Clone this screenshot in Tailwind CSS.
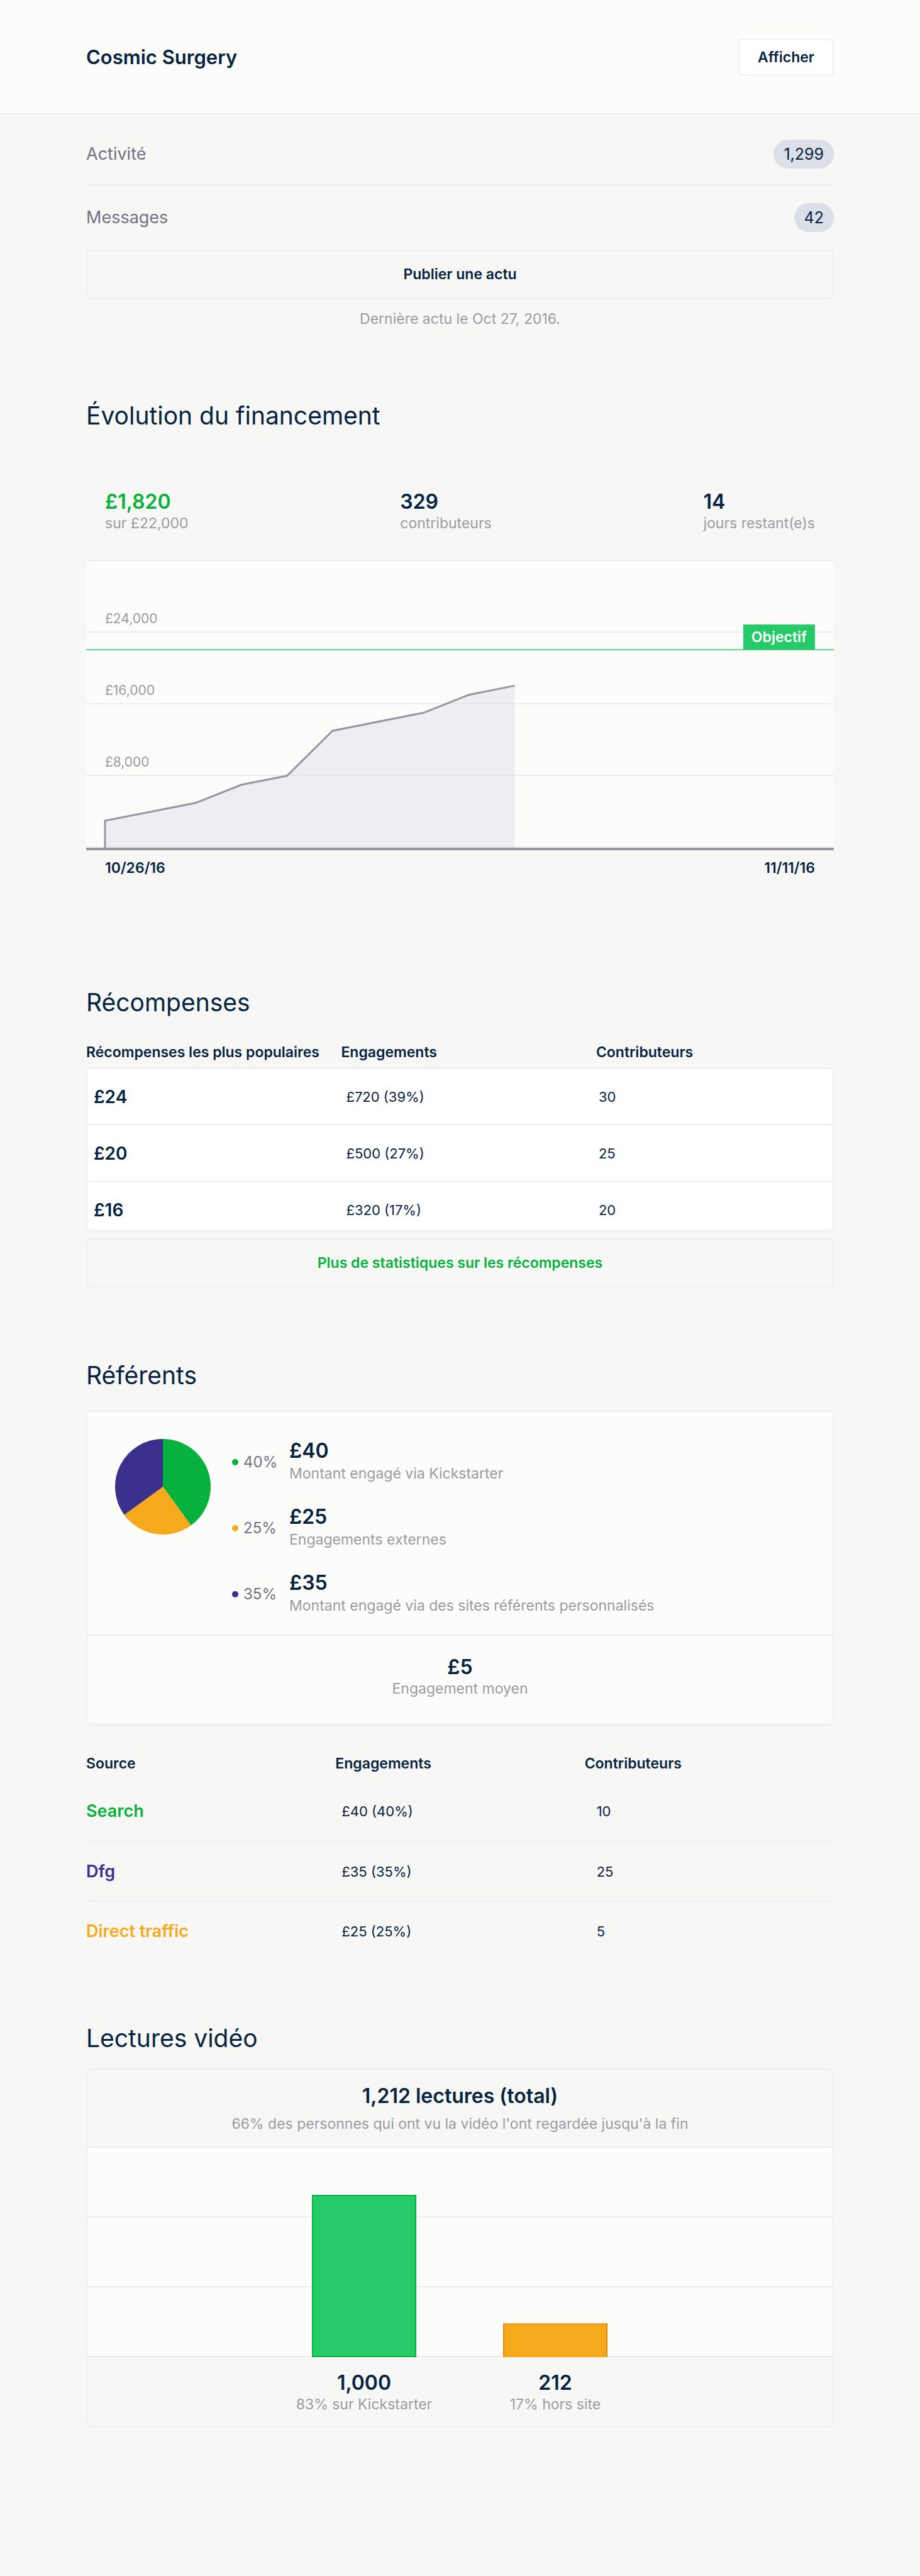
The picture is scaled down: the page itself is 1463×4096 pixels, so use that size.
<!DOCTYPE html>
<html lang="fr">
<head>
<meta charset="utf-8">
<title>Cosmic Surgery</title>
<meta name="viewport" content="width=device-width, initial-scale=1">
<script src="https://cdn.jsdelivr.net/npm/@tailwindcss/browser@4"></script>
</head>
<body class="min-h-screen bg-[#f7f7f6] pb-16 font-[Inter,sans-serif] text-[23px]/[32px] text-[#062340]">

<header class="flex items-start justify-between border-b-2 border-[#ececec] bg-[#fcfcfa] px-[137px] pt-[62px] pb-[60px]">
  <h1 class="text-[31px]/[58px] font-semibold">Cosmic Surgery</h1>
  <button type="button" class="h-[58px] rounded-[4px] border-2 border-[#eeeff3] bg-white px-[29px] font-semibold">Afficher</button>
</header>

<main class="px-[137px]">

  <nav class="text-[27px]/[46px] text-[#717284]">
    <a href="#activite" class="flex justify-between border-b-2 border-[#ececec] pt-10 pb-[25px]">
      <span>Activité</span>
      <span class="rounded-full bg-[#dcdee8] px-4 text-[25px]/[46px] text-[#062340]">1,299</span>
    </a>
    <a href="#messages" class="flex justify-between py-7">
      <span>Messages</span>
      <span class="rounded-full bg-[#dcdee8] px-4 text-[25px]/[46px] text-[#062340]">42</span>
    </a>
  </nav>
  <button type="button" class="block h-[78px] w-full rounded-[4px] border-2 border-[#eeeff3] font-semibold">Publier une actu</button>
  <p class="mt-4 text-center text-[#9b9ba3]">Dernière actu le Oct 27, 2016.</p>

  <!-- Funding progress -->
  <section class="mt-28">
    <h2 class="text-[39px]/[52px]">Évolution du financement</h2>
    <dl class="mt-[93px] flex justify-between px-[30px] pb-[42px]">
      <div class="flex flex-col-reverse">
        <dt class="text-[#9b9ba3]">sur £22,000</dt>
        <dd class="text-[32px]/[36px] font-semibold text-[#06b13c]">£1,820</dd>
      </div>
      <div class="flex flex-col-reverse">
        <dt class="text-[#9b9ba3]">contributeurs</dt>
        <dd class="text-[32px]/[36px] font-semibold">329</dd>
      </div>
      <div class="flex flex-col-reverse">
        <dt class="text-[#9b9ba3]">jours restant(e)s</dt>
        <dd class="text-[32px]/[36px] font-semibold">14</dd>
      </div>
    </dl>
    <div class="relative border-t-2 border-b-4 border-t-[#ececec] border-b-[#96969f] bg-[#fcfcfa] text-[21px]/[28px] text-[#9b9ba3]">
      <div class="flex h-[114px] items-end border-b-2 border-[#ececec] px-[30px] pb-[6px]">£24,000</div>
      <div class="flex h-[114px] items-end border-b-2 border-[#ececec] px-[30px] pb-[6px]">£16,000</div>
      <div class="flex h-[114px] items-end border-b-2 border-[#ececec] px-[30px] pb-[6px]">£8,000</div>
      <div class="h-[114px] border-b-2 border-[#ececec]"></div>
      <div class="absolute inset-x-[30px] -top-[2px] bottom-0">
        <svg class="block h-full w-full overflow-visible" viewBox="0 0 156 32" preserveAspectRatio="none" aria-hidden="true">
          <path d="M0 32V29L20 27L30 25L40 24L50 19L70 17L80 15L90 14V32Z" fill="#dcdee8" fill-opacity=".45"/>
          <path d="M0 32V29L20 27L30 25L40 24L50 19L70 17L80 15L90 14" fill="none" stroke="#96969f" stroke-width="3" vector-effect="non-scaling-stroke"/>
        </svg>
      </div>
      <div class="absolute inset-x-0 bottom-[314px] flex justify-end border-b-2 border-[#5fd68f] px-[30px]">
        <span class="-mb-px bg-[#25cb68] px-[13px] py-1 text-[23px]/[32px] font-semibold text-white">Objectif</span>
      </div>
    </div>
    <div class="mt-3 flex justify-between px-[30px] font-semibold">
      <time>10/26/16</time>
      <time>11/11/16</time>
    </div>
  </section>

  <!-- Rewards -->
  <section class="mt-[172px]">
    <h2 class="text-[39px]/[52px]">Récompenses</h2>
    <table class="mt-[37px] w-full table-fixed border-separate border-spacing-0 text-left text-[22px]/[32px]">
      <colgroup><col class="w-[34.1%]"><col class="w-[34.1%]"><col></colgroup>
      <thead class="text-[23px]/[32px]">
        <tr>
          <th class="pb-[9px] font-semibold whitespace-nowrap">Récompenses les plus populaires</th>
          <th class="pb-[9px] font-semibold">Engagements</th>
          <th class="pb-[9px] font-semibold">Contributeurs</th>
        </tr>
      </thead>
      <tbody>
        <tr class="h-[91px]">
          <td class="rounded-tl-[6px] border-y-2 border-l-2 border-[#eeeff3] bg-white pl-[10px] text-[28px]/[32px] font-semibold">£24</td>
          <td class="border-y-2 border-[#eeeff3] bg-white pl-2">£720 (39%)</td>
          <td class="rounded-tr-[6px] border-y-2 border-r-2 border-[#eeeff3] bg-white pl-1">30</td>
        </tr>
        <tr class="h-[91px]">
          <td class="border-b-2 border-l-2 border-[#eeeff3] bg-white pl-[10px] text-[28px]/[32px] font-semibold">£20</td>
          <td class="border-b-2 border-[#eeeff3] bg-white pl-2">£500 (27%)</td>
          <td class="border-r-2 border-b-2 border-[#eeeff3] bg-white pl-1">25</td>
        </tr>
        <tr class="h-[78px]">
          <td class="rounded-bl-[6px] border-b-2 border-l-2 border-[#eeeff3] bg-white pt-3 pl-[10px] text-[28px]/[32px] font-semibold">£16</td>
          <td class="border-b-2 border-[#eeeff3] bg-white pt-3 pl-2">£320 (17%)</td>
          <td class="rounded-br-[6px] border-r-2 border-b-2 border-[#eeeff3] bg-white pt-3 pl-1">20</td>
        </tr>
      </tbody>
    </table>
    <button type="button" class="mt-[11px] block h-[78px] w-full rounded-[4px] border-2 border-[#eeeff3] font-semibold text-[#06b13c]">Plus de statistiques sur les récompenses</button>
  </section>

  <!-- Referrers -->
  <section class="mt-[114px]">
    <h2 class="text-[39px]/[52px]">Référents</h2>
    <div class="mt-[30px] rounded-[8px] border-2 border-[#eeeff3] bg-[#fcfcfa]">
      <div class="flex px-11 pt-[43px] pb-7">
        <svg class="size-[152px] shrink-0" viewBox="-80 -80 160 160" aria-hidden="true">
          <path d="M0 0V-80A80 80 0 0 1 47.02 64.72Z" fill="#06b13c"/>
          <path d="M0 0L47.02 64.72A80 80 0 0 1 -64.72 47.02Z" fill="#f7a91c"/>
          <path d="M0 0L-64.72 47.02A80 80 0 0 1 0 -80Z" fill="#3b308b"/>
        </svg>
        <ul class="mt-px ml-[34px] flex flex-col gap-[33px]">
          <li class="flex items-center">
            <span class="mr-2 size-[10px] rounded-full bg-[#06b13c]"></span>
            <span class="w-[73px] text-[24px]/[36px] text-[#717284]">40%</span>
            <div><p class="text-[32px]/[36px] font-semibold">£40</p><p class="text-[23px]/[36px] text-[#9b9ba3]">Montant engagé via Kickstarter</p></div>
          </li>
          <li class="flex items-center">
            <span class="mr-2 size-[10px] rounded-full bg-[#f7a91c]"></span>
            <span class="w-[73px] text-[24px]/[36px] text-[#717284]">25%</span>
            <div><p class="text-[32px]/[36px] font-semibold">£25</p><p class="text-[23px]/[36px] text-[#9b9ba3]">Engagements externes</p></div>
          </li>
          <li class="flex items-center">
            <span class="mr-2 size-[10px] rounded-full bg-[#3b308b]"></span>
            <span class="w-[73px] text-[24px]/[36px] text-[#717284]">35%</span>
            <div><p class="text-[32px]/[36px] font-semibold">£35</p><p class="text-[23px]/[36px] text-[#9b9ba3]">Montant engagé via des sites référents personnalisés</p></div>
          </li>
        </ul>
      </div>
      <div class="border-t-2 border-[#ececec] pt-8 pb-10 text-center">
        <p class="text-[32px]/[36px] font-semibold">£5</p>
        <p class="text-[#9b9ba3]">Engagement moyen</p>
      </div>
    </div>
    <table class="mt-[45px] w-full table-fixed text-left text-[22px]/[32px]">
      <thead class="text-[23px]/[32px]">
        <tr>
          <th class="pb-[13px] font-semibold">Source</th>
          <th class="pb-[13px] font-semibold">Engagements</th>
          <th class="pb-[13px] font-semibold">Contributeurs</th>
        </tr>
      </thead>
      <tbody>
        <tr class="h-[95px] border-b-2 border-[#eeeff3]">
          <td class="text-[27px]/[32px] font-semibold text-[#06b13c]">Search</td>
          <td class="pl-[10px]">£40 (40%)</td>
          <td class="pl-[19px]">10</td>
        </tr>
        <tr class="h-[95px] border-b-2 border-[#eeeff3]">
          <td class="text-[27px]/[32px] font-semibold text-[#3b308b]">Dfg</td>
          <td class="pl-[10px]">£35 (35%)</td>
          <td class="pl-[19px]">25</td>
        </tr>
        <tr class="h-[95px]">
          <td class="text-[27px]/[32px] font-semibold text-[#f7a91c]">Direct traffic</td>
          <td class="pl-[10px]">£25 (25%)</td>
          <td class="pl-[19px]">5</td>
        </tr>
      </tbody>
    </table>
  </section>

  <!-- Video plays -->
  <section class="mt-[97px]">
    <h2 class="text-[39px]/[52px]">Lectures vidéo</h2>
    <div class="mt-[22px] rounded-[8px] border-2 border-[#eeeff3] text-center">
      <div class="border-b-2 border-[#ececec] pt-6 pb-5">
        <p class="text-[32px]/[36px] font-semibold">1,212 lectures (total)</p>
        <p class="mt-[10px] text-[#9b9ba3]">66% des personnes qui ont vu la vidéo l'ont regardée jusqu'à la fin</p>
      </div>
      <div class="relative bg-[#fcfcfa]">
        <div class="h-[111px] border-b-2 border-[#ececec]"></div>
        <div class="h-[111px] border-b-2 border-[#ececec]"></div>
        <div class="h-[111px] border-b-2 border-[#ececec]"></div>
        <div class="absolute inset-0 grid grid-cols-[210px_166px] items-end justify-center justify-items-center gap-x-[116px] pr-[23px]">
          <div class="h-[258px] w-[166px] border-2 border-[#06b13c] bg-[#25cb68]"></div>
          <div class="h-[54px] w-[166px] border-2 border-[#e0860f] border-t-[#f0a030] border-b-[#f59e12] bg-[#f7a91c]"></div>
        </div>
      </div>
      <dl class="grid grid-cols-[210px_166px] justify-center gap-x-[116px] pt-[23px] pr-[23px] pb-[19px]">
        <div class="flex flex-col-reverse">
          <dt class="self-center whitespace-nowrap text-[#9b9ba3]">83% sur Kickstarter</dt>
          <dd class="text-[32px]/[36px] font-semibold">1,000</dd>
        </div>
        <div class="flex flex-col-reverse">
          <dt class="self-center whitespace-nowrap text-[#9b9ba3]">17% hors site</dt>
          <dd class="text-[32px]/[36px] font-semibold">212</dd>
        </div>
      </dl>
    </div>
  </section>
</main>
</body>
</html>
